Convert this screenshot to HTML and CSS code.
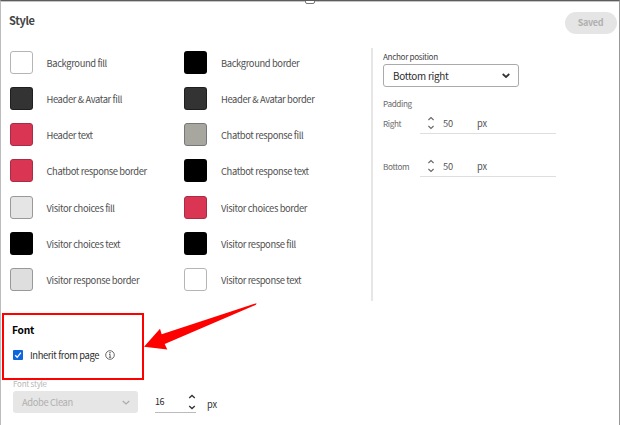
FILE: index.html
```html
<!DOCTYPE html>
<html lang="en">
<head>
<meta charset="utf-8">
<title>Style</title>
<link rel="stylesheet" href="styles.css">
</head>
<body>
<main class="panel">
  <span class="handle"></span>
  <header class="header">
    <h1 class="title">Style</h1>
    <button class="saved" disabled>Saved</button>
  </header>
  <section class="settings">
    <div class="colors">
      <div class="color"><i class="swatch white"></i><span>Background fill</span></div>
      <div class="color"><i class="swatch black"></i><span>Background border</span></div>
      <div class="color"><i class="swatch dark"></i><span>Header &amp; Avatar fill</span></div>
      <div class="color"><i class="swatch dark"></i><span>Header &amp; Avatar border</span></div>
      <div class="color"><i class="swatch red"></i><span>Header text</span></div>
      <div class="color"><i class="swatch stone"></i><span>Chatbot response fill</span></div>
      <div class="color"><i class="swatch red"></i><span>Chatbot response border</span></div>
      <div class="color"><i class="swatch black"></i><span>Chatbot response text</span></div>
      <div class="color"><i class="swatch light"></i><span>Visitor choices fill</span></div>
      <div class="color"><i class="swatch red"></i><span>Visitor choices border</span></div>
      <div class="color"><i class="swatch black"></i><span>Visitor choices text</span></div>
      <div class="color"><i class="swatch black"></i><span>Visitor response fill</span></div>
      <div class="color"><i class="swatch gray"></i><span>Visitor response border</span></div>
      <div class="color"><i class="swatch white"></i><span>Visitor response text</span></div>
    </div>
    <div class="position">
      <div class="label anchor-label">Anchor position</div>
      <div class="select anchor"><span>Bottom right</span>
        <svg class="chevron" viewBox="0 0 8 5"><path d="M.7 1L4 4l3.300-3"/></svg>
      </div>
      <div class="label padding-label">Padding</div>
      <div class="pad-row"><span class="label">Right</span>
        <div class="pad-field"><svg class="stepper" viewBox="0 0 6 12"><path d="M.4 3L3 .6 5.600 3M.4 9L3 11.400 5.600 9"/></svg><span class="value">50</span><span>px</span></div>
      </div>
      <div class="pad-row"><span class="label">Bottom</span>
        <div class="pad-field"><svg class="stepper" viewBox="0 0 6 12"><path d="M.4 3L3 .6 5.600 3M.4 9L3 11.400 5.600 9"/></svg><span class="value">50</span><span>px</span></div>
      </div>
    </div>
  </section>
  <section class="font-box">
    <h2 class="font-title">Font</h2>
    <div class="inherit">
      <svg class="check" viewBox="0 0 10 10"><rect width="10" height="10" rx="1"/><path d="M2.200 5.200l2 2.100L7.900 2.700"/></svg>
      <span class="inherit-text">Inherit from page</span>
      <svg class="info" viewBox="0 0 10 10"><circle cx="5" cy="5" r="4.300"/><path d="M4 4.400H5.100V7.200M3.900 7.300H6.200"/><circle class="dot" cx="5" cy="2.700" r=".7"/></svg>
    </div>
  </section>
  <div class="font-label">Font style</div>
  <div class="font-row">
    <div class="select disabled"><span>Adobe Clean</span>
      <svg class="chevron" viewBox="0 0 8 5"><path d="M.7 1L4 4l3.300-3"/></svg>
    </div>
    <div class="size"><span>16</span>
      <svg class="size-stepper" viewBox="0 0 8 16"><path d="M1.200 4L4 1.400 6.800 4M1.200 12L4 14.600 6.800 12"/></svg>
    </div>
    <span class="unit">px</span>
  </div>
  <svg class="arrow" viewBox="0 0 114 48"><path d="M113.500 1.200L18.700 32.300 17 26.700 1 44.700 24.300 47.500 21.700 42 113 2.700z"/></svg>
</main>
</body>
</html>
```

FILE: styles.css
```css
* { box-sizing: border-box; }
body {
  margin: 0;
  background: #fff;
  color: #505050;
  font: 9.400px/16px "Noto Sans CJK SC", "Open Sans", sans-serif;
  letter-spacing: -.38px;
  white-space: nowrap;
}
h1, h2 { margin: 0; }
svg { display: block; flex: none; fill: none; overflow: visible; }
.panel {
  position: relative;
  width: 620px;
  height: 425px;
  overflow: hidden;
  border-top: 1px solid #5c5c5c;
  border-left: 1px solid #bcbcbc;
  border-right: 1px solid #999;
  box-shadow: inset 0 1px #c4c4c4;
}
.handle {
  position: absolute;
  top: -3px;
  left: 304px;
  width: 10px;
  height: 6px;
  border: 1px solid #777;
  border-radius: 2px;
  background: #fff;
}
.header {
  display: flex;
  align-items: flex-start;
  justify-content: space-between;
  height: 47px;
  padding: 11px 2px 0 8px;
}
.title { font-size: 11px; line-height: 17px; letter-spacing: -.35px; color: #444; }
.saved {
  width: 52px;
  height: 22px;
  padding: 0 1px 0 0;
  border: 0;
  border-radius: 11px;
  background: #e5e5e5;
  color: #b0b0b0;
  font: bold 9px/20px "Noto Sans CJK SC", sans-serif;
  letter-spacing: -.3px;
}
.settings { display: flex; height: 253px; }
.colors {
  display: grid;
  grid-template-columns: 174.500px 1fr;
  grid-auto-rows: 36.170px;
  width: 372px;
  padding: 3px 0 0 8.500px;
  border-right: 2px solid #e6e6e6;
}
.color { display: flex; gap: 14px; height: 23px; align-items: center; }
.color span { padding-top: 1px; }
.swatch {
  width: 23px;
  height: 23px;
  border: 1px solid rgba(0, 0, 0, .4);
  border-radius: 3px;
}
.white { background: #fff; border-color: #b5b5b5; }
.black { background: #000; }
.dark { background: #333; }
.red { background: #da3654; border-color: #a82c45; }
.stone { background: #a7a79f; border-color: #777; }
.light { background: #e5e5e5; border-color: #999; }
.gray { background: #dedede; border-color: #999; }
.position { width: 184px; padding-left: 10px; color: #555; }
.label { font-size: 8.200px; line-height: 14px; color: #6a6a6a; }
.anchor-label { padding-top: 1px; color: #484848; }
.select { display: flex; align-items: center; justify-content: space-between; border-radius: 3px; }
.anchor {
  width: 136px;
  height: 23px;
  margin-top: 1px;
  padding: 0 8px 0 9px;
  border: 1px solid #aaa;
  font-size: 9.900px;
  letter-spacing: -.25px;
  color: #2c2c2c;
}
.chevron { width: 8px; height: 5px; stroke: #333; stroke-width: 1.700; }
.padding-label { margin-top: 9px; }
.pad-row { display: flex; align-items: flex-start; height: 43px; }
.padding-label + .pad-row { margin-top: 3px; }
.pad-row > .label { width: 37px; padding-top: 3px; }
.pad-field {
  display: flex;
  align-items: center;
  width: 136px;
  height: 21px;
  padding: 0 0 1px 8px;
  border-bottom: 1px solid #dedede;
  font-size: 9.300px;
  letter-spacing: -.1px;
}
.stepper { width: 6px; height: 12px; stroke: #666; stroke-width: 1.100; }
.value { width: 34px; margin-left: 9px; }
.font-box {
  width: 142px;
  height: 67px;
  margin: 12px 0 0 1px;
  padding: 6px 0 0 8px;
  border: 2px solid #f00;
  color: #2c2c2c;
}
.font-title { font-size: 10.200px; line-height: 18px; letter-spacing: -.2px; color: #000; }
.inherit { display: flex; align-items: center; margin-top: 8px; padding-left: 1px; }
.inherit-text { width: 71px; }
.check { width: 10px; height: 10px; margin-right: 7px; fill: #0d66dc; }
.check path { fill: none; stroke: #fff; stroke-width: 1.300; }
.info { width: 10px; height: 10px; margin-left: 4px; stroke: #444; stroke-width: .8; }
.info .dot { fill: #444; stroke: none; }
.font-label { margin-top: -2px; padding-left: 12px; font-size: 8px; line-height: 12px; letter-spacing: -.25px; color: #b8b8b8; }
.font-row { display: flex; padding-left: 12px; margin-top: 1px; }
.disabled { width: 125px; height: 22px; padding: 0 8px 0 9px; background: #e6e6e6; color: #b0b0b0; }
.disabled .chevron { stroke: #aaa; stroke-width: 1.200; }
.size {
  display: flex;
  align-items: center;
  justify-content: space-between;
  width: 41px;
  height: 22px;
  margin-left: 17px;
  border-bottom: 1px solid #bbb;
  color: #2c2c2c;
  font-size: 9px;
}
.size-stepper { width: 8px; height: 16px; stroke: #333; stroke-width: 1.300; }
.unit { margin: 5px 0 0 11px; font-size: 9.300px; letter-spacing: -.1px; color: #333; }
.arrow { position: absolute; top: 301px; left: 142px; width: 114px; height: 48px; fill: #f00; }
```
